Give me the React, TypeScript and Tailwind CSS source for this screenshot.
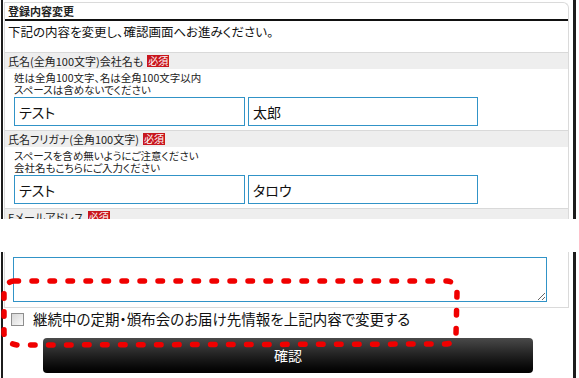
import React from 'react'

const jp = "font-['Noto_Sans_CJK_JP','Noto_Sans',sans-serif] [font-feature-settings:'palt']"

function Badge() {
  return (
    <span className="ml-[4px] inline-block h-[12px] bg-[#c8161d] px-[1px] text-[10px] leading-[12px] text-white align-middle">
      必須
    </span>
  )
}

function Section({ label, notes, values }: { label: string; notes: string[]; values: string[] }) {
  return (
    <div>
      <div className="flex h-[17px] items-center border-t border-[#d9d9d9] bg-[#eeeeee] pl-[3px] text-[11px] leading-[15px] text-[#222]">
        <span>{label}</span>
        <Badge />
      </div>
      <div className="pl-[9px] pt-[3px] pb-[4px]">
        <p className="text-[10.5px] leading-[12px] text-[#222]">
          {notes[0]}
          <br />
          {notes[1]}
        </p>
        <div className="mt-[1px] flex gap-[3px]">
          {values.map((v, i) => (
            <input
              key={i}
              readOnly
              value={v}
              className={`h-[29px] border border-[#3193c7] bg-white px-[4px] text-[14px] text-[#111] outline-none ${jp} ${i === 0 ? 'w-[231px]' : 'w-[230px]'}`}
            />
          ))}
        </div>
      </div>
    </div>
  )
}

export default function App() {
  return (
    <div className={`relative h-[378px] w-[579px] overflow-hidden bg-white ${jp}`}>
      {/* upper part of the form */}
      <div className="ml-px mr-[3px] h-[219px] overflow-hidden border-l-2 border-r-[3px] border-[#1c1c1c]">
        <div className="ml-px mr-[4px] mt-[2px] h-full rounded-tr-[6px] border-x border-t border-[#dadada]">
          <div className="h-[18px] border-b-2 border-[#111] pl-[3px] text-[11px] font-bold leading-[16px] text-[#222]">
            登録内容変更
          </div>
          <p className="h-[22px] pl-[3px] text-[12.5px] leading-[22px] text-[#111]">
            下記の内容を変更し、確認画面へお進みください。
          </p>
          <div className="mt-[9px]">
            <Section
              label="氏名(全角100文字)会社名も"
              notes={['姓は全角100文字、名は全角100文字以内', 'スペースは含めないでください']}
              values={['テスト', '太郎']}
            />
            <Section
              label="氏名フリガナ(全角100文字)"
              notes={['スペースを含め無いようにご注意ください', '会社名もこちらにご入力ください']}
              values={['テスト', 'タロウ']}
            />
            <div className="flex h-[17px] items-center border-t border-[#d9d9d9] bg-[#eeeeee] pl-[3px] text-[11px] leading-[15px] text-[#222]">
              <span>Eメールアドレス</span>
              <Badge />
            </div>
          </div>
        </div>
      </div>

      {/* lower part of the form */}
      <div className="ml-px mr-[3px] mt-[33px] h-[126px] border-l-2 border-r-[3px] border-[#1c1c1c]">
        <div className="ml-px mr-[4px] border-x border-b border-[#dadada] pb-[5px] pl-[8px] pt-[5px]">
          <textarea
            readOnly
            className="block h-[45px] w-[534px] border border-[#3193c7] bg-white outline-none"
          />
        </div>
        <label className="mt-[2px] flex items-center pl-[8px]">
          <input
            type="checkbox"
            className="h-[13px] w-[13px] appearance-none border border-[#8e8e8e] bg-gradient-to-br from-[#d6d6d6] to-[#fafafa]"
          />
          <span className="ml-[9px] text-[14.5px] leading-[18px] text-[#111]">
            継続中の定期・頒布会のお届け先情報を上記内容で変更する
          </span>
        </label>
        <button className="ml-[40px] mt-[10px] flex h-[35px] w-[490px] items-center justify-center rounded-[4px] bg-gradient-to-b from-[#4a4a4a] to-[#020202] text-[14px] text-white">
          確認
        </button>
      </div>

      {/* red dashed annotation */}
      <svg className="pointer-events-none absolute left-0 top-0" width="579" height="378" viewBox="0 0 579 378">
        <path
          d="M14 281 L447 281 Q457 282 457 293 L456 334 Q455 344 445 344 L18 345 Q6 344 4 334 L4 292 Q5 282 14 281 Z"
          fill="none"
          stroke="#f00000"
          strokeWidth="5.5"
          strokeLinecap="round"
          strokeDasharray="4.5 13.5"
        />
      </svg>
    </div>
  )
}
